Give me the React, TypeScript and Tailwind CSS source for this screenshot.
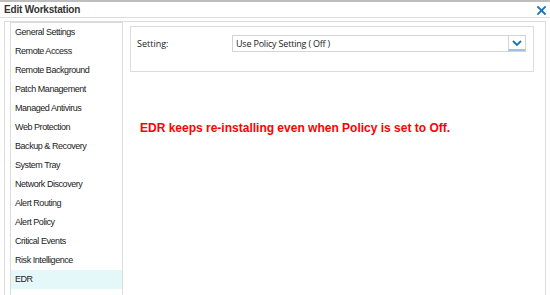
import React from "react";

const items = [
  "General Settings",
  "Remote Access",
  "Remote Background",
  "Patch Management",
  "Managed Antivirus",
  "Web Protection",
  "Backup & Recovery",
  "System Tray",
  "Network Discovery",
  "Alert Routing",
  "Alert Policy",
  "Critical Events",
  "Risk Intelligence",
  "EDR",
];

export default function App() {
  return (
    <div className="w-[550px] h-[295px] overflow-hidden bg-white border-t-2 border-[#bdbdbd] font-['Liberation_Sans',Arial,sans-serif]">
      {/* title bar */}
      <div className="flex h-[16px] items-center justify-between border-b border-[#dcdcdc] pl-[4px] pr-[4px]">
        <span className="text-[10px] font-bold tracking-[-0.2px] text-[#333]">
          Edit Workstation
        </span>
        <svg width="9" height="9" viewBox="0 0 9 9" className="mt-[1px]">
          <path
            d="M1 1 L8 8 M8 1 L1 8"
            stroke="#1a73b8"
            strokeWidth="1.8"
            strokeLinecap="square"
          />
        </svg>
      </div>

      {/* body */}
      <div className="ml-[4px] mr-[4px] mt-[3px] flex h-[300px] border-l border-r border-t border-[#dcdcdc] pl-[5px]">
        {/* nav list */}
        <div className="w-[113px] shrink-0 border-l border-r border-t border-[#dcdcdc]">
          {items.map((it) => (
            <div
              key={it}
              className={
                "flex h-[19px] items-center pl-[4px] text-[9px] tracking-[-0.45px] text-[#222] " +
                (it === "EDR" ? "bg-[#e4f7f9]" : "")
              }
            >
              {it}
            </div>
          ))}
        </div>

        {/* content */}
        <div className="flex-1 pl-[7px] pr-[11px] pt-[4px]">
          <div className="flex h-[46px] items-start border border-[#dcdcdc] pl-[6px] pr-[7px] pt-[8px]">
            <span className="w-[95px] pt-[2px] font-['Open_Sans',sans-serif] text-[9px] text-[#222]">
              Setting:
            </span>
            <div className="flex h-[17px] flex-1 items-center border border-[#d4d4d4]">
              <span className="flex-1 pl-[3px] font-['Open_Sans',sans-serif] text-[9px] tracking-[-0.2px] text-[#222]">
                Use Policy Setting ( Off )
              </span>
              <div className="flex h-full w-[17px] items-center justify-center border-l border-[#d4d4d4] border-b-2 border-b-[#9cc3e4]">
                <svg width="10" height="6" viewBox="0 0 10 6">
                  <path
                    d="M1 1 L5 5 L9 1"
                    fill="none"
                    stroke="#1a73b8"
                    strokeWidth="1.8"
                  />
                </svg>
              </div>
            </div>
          </div>

          <div className="mt-[47px] pl-[10px] text-[12px] font-bold text-[#ff0000]">
            EDR keeps re-installing even when Policy is set to Off.
          </div>
        </div>
      </div>
    </div>
  );
}
